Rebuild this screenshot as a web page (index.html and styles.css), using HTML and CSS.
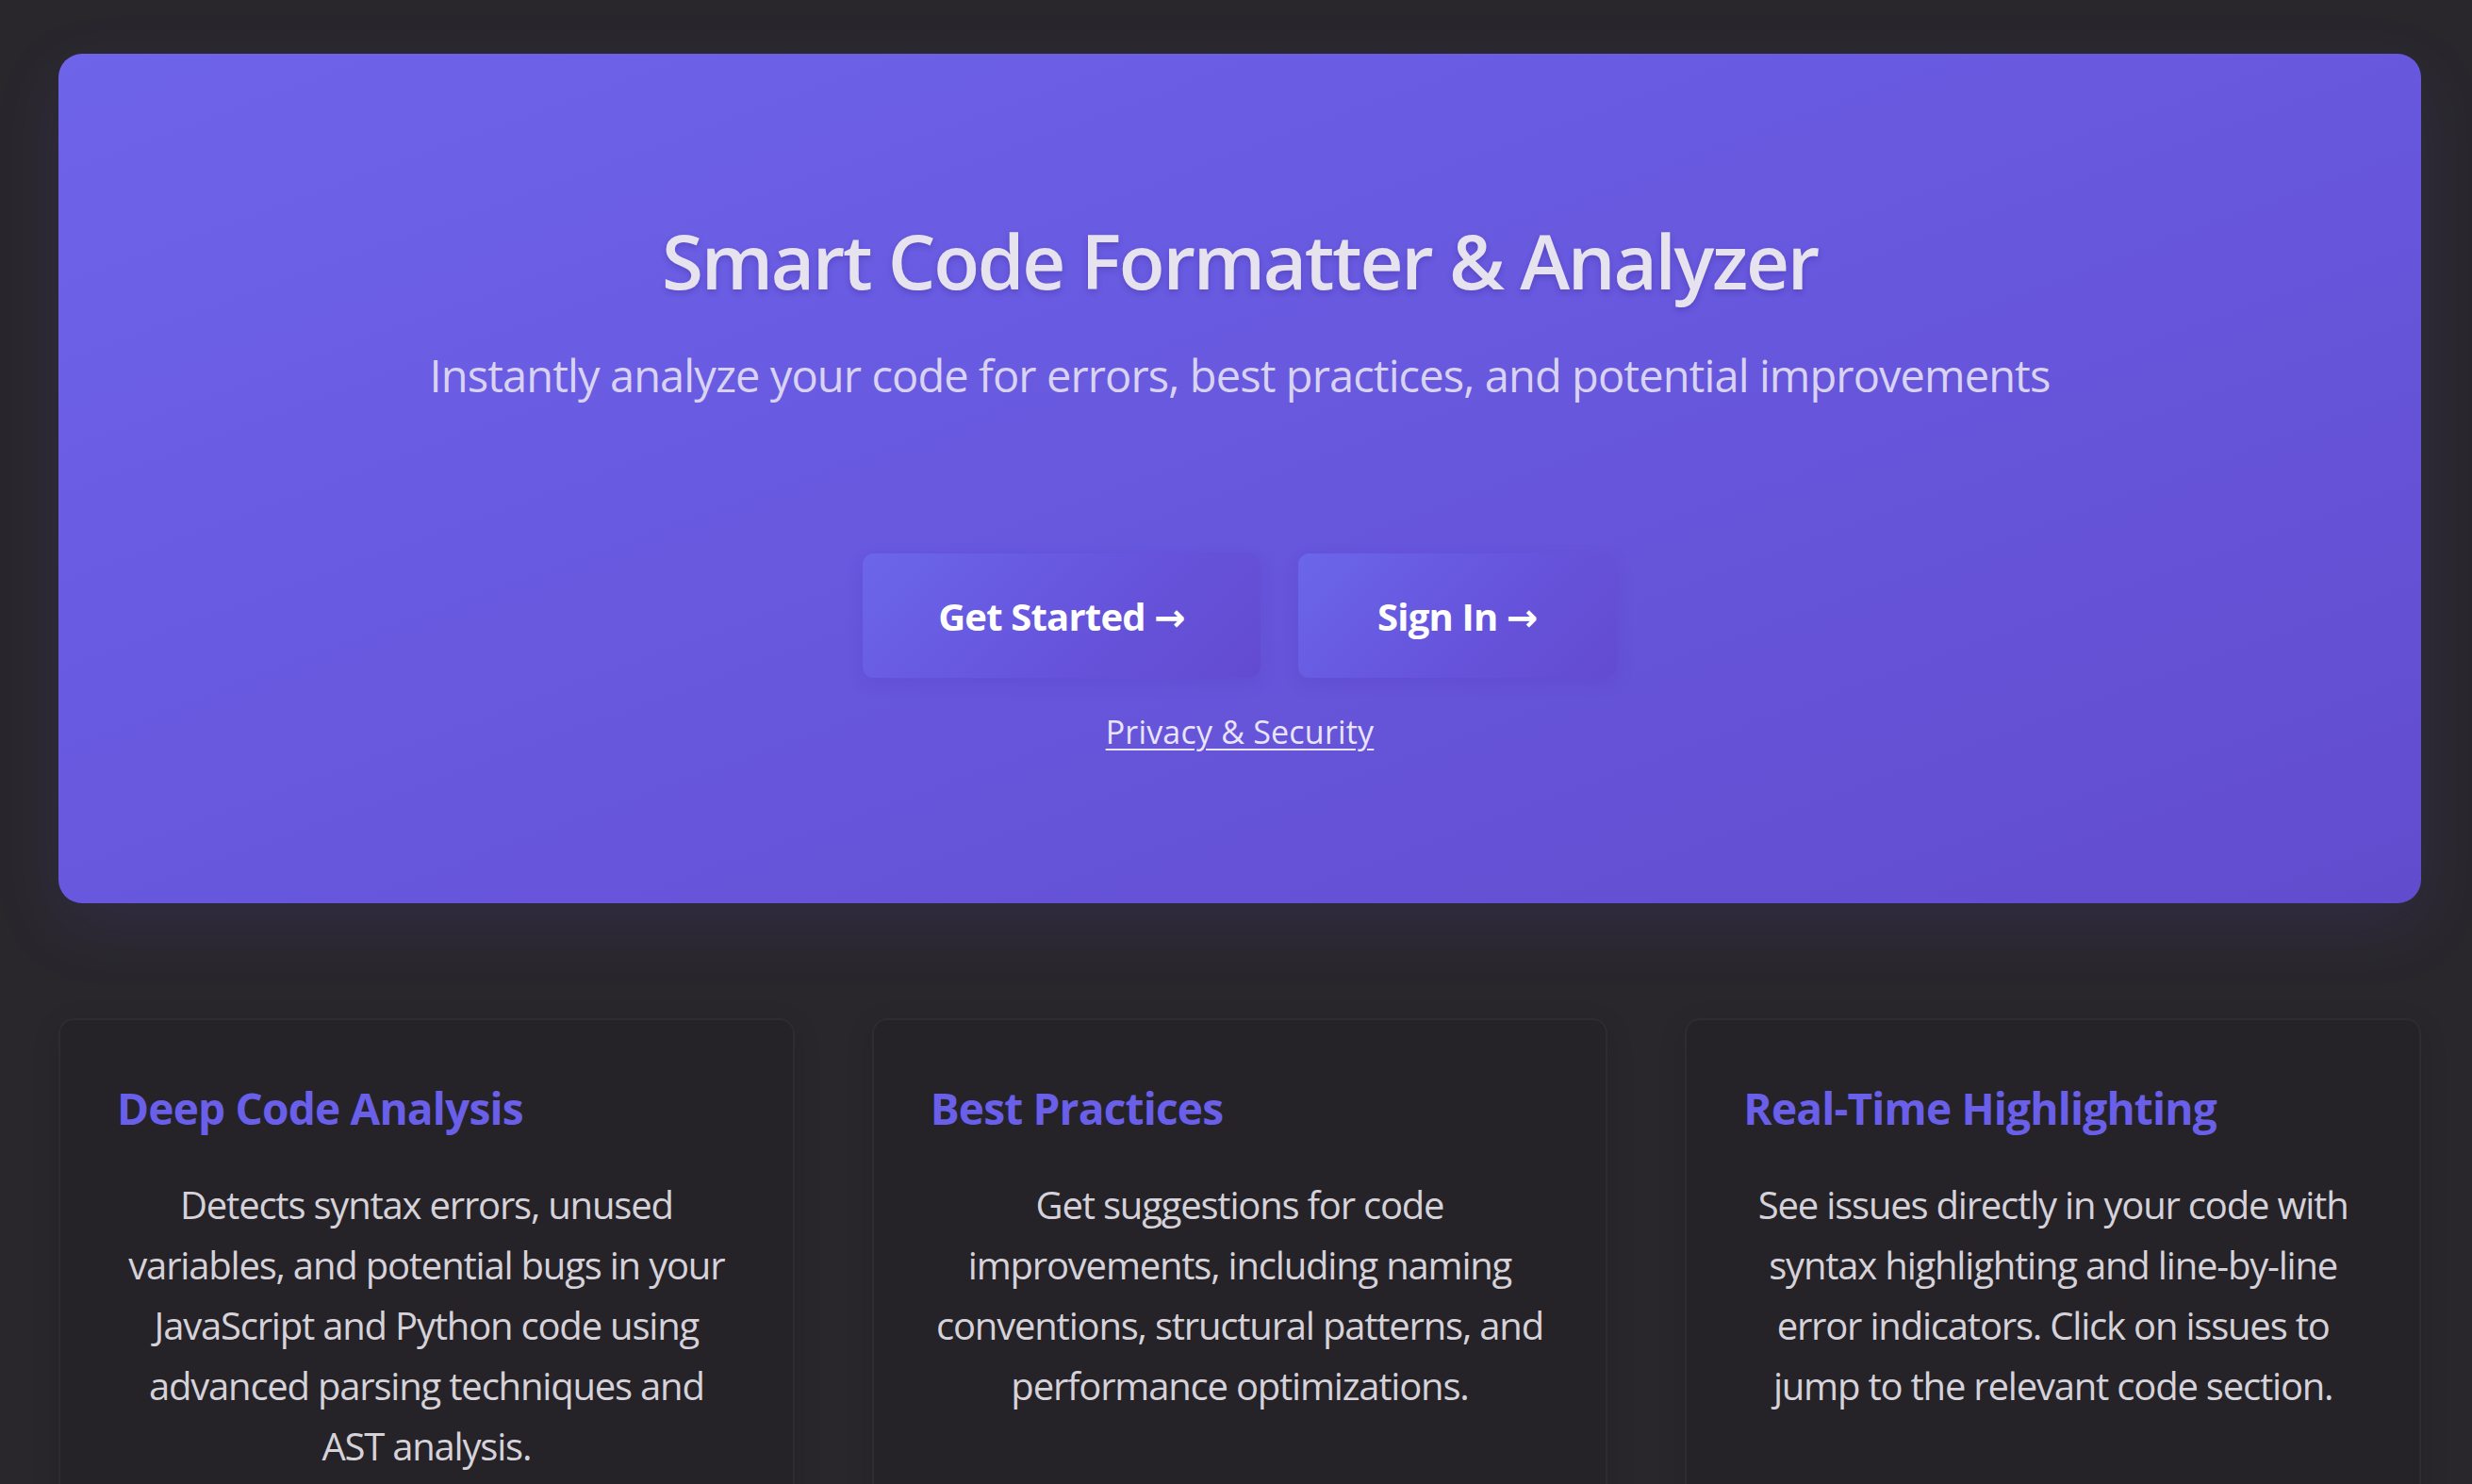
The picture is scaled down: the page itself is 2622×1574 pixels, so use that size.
FILE: index.html
```html
<!DOCTYPE html>
<html lang="en">
<head>
<meta charset="utf-8">
<title>Smart Code Formatter &amp; Analyzer</title>
<link rel="stylesheet" href="styles.css">
</head>
<body>
<main class="page">
  <section class="hero">
    <h1 class="hero-title">Smart Code Formatter &amp; Analyzer</h1>
    <p class="hero-subtitle">Instantly analyze your code for errors, best practices, and potential improvements</p>
    <div class="hero-actions">
      <a class="btn btn-start" href="#">Get Started →</a>
      <a class="btn btn-signin" href="#">Sign In →</a>
    </div>
    <a class="privacy-link" href="#">Privacy &amp; Security</a>
  </section>
  <section class="features">
    <article class="card">
      <h2 class="card-title">Deep Code Analysis</h2>
      <p class="card-text">Detects syntax errors, unused variables, and potential bugs in your JavaScript and Python code using advanced parsing techniques and AST analysis.</p>
    </article>
    <article class="card">
      <h2 class="card-title">Best Practices</h2>
      <p class="card-text">Get suggestions for code improvements, including naming conventions, structural patterns, and performance optimizations.</p>
    </article>
    <article class="card">
      <h2 class="card-title">Real-Time Highlighting</h2>
      <p class="card-text">See issues directly in your code with syntax highlighting and line-by-line error indicators. Click on issues to jump to the relevant code section.</p>
    </article>
  </section>
</main>
</body>
</html>
```
FILE: styles.css
```css
* { box-sizing: border-box; }
html, body { margin: 0; padding: 0; }
body {
  background: #29272c;
  font-family: "Open Sans", "Noto Sans", "DejaVu Sans", sans-serif;
  color: #e4e1ea;
  overflow: hidden;
}
.page {
  padding: 57px 54px 0 62px;
}
.hero {
  height: 901px;
  border-radius: 25px;
  background: linear-gradient(160deg, #6e64e9 0%, #6859df 45%, #624cce 100%);
  box-shadow: 0 24px 70px rgba(98, 80, 210, 0.14);
  display: flex;
  flex-direction: column;
  align-items: center;
  padding-top: 171px;
  text-align: center;
}
.hero-title {
  margin: 0;
  font-size: 80px;
  line-height: 96px;
  font-weight: 600;
  color: #e6e3ee;
  letter-spacing: -2.3px;
  text-shadow: 0 3px 6px rgba(40, 20, 120, 0.25);
}
.hero-subtitle {
  margin: 39px 0 0;
  font-size: 47px;
  line-height: 70px;
  font-weight: 400;
  color: #d9d3f2;
  letter-spacing: -0.9px;
}
.hero-actions {
  margin-top: 154px;
  display: flex;
  gap: 40px;
}
.btn {
  display: flex;
  align-items: center;
  justify-content: center;
  height: 132px;
  padding: 0 80px;
  border-radius: 12px;
  color: #ffffff;
  font-size: 40px;
  font-weight: 700;
  text-decoration: none;
  letter-spacing: -0.8px;
  background: linear-gradient(135deg, #6b66ea 0%, #6654dc 55%, #634bd0 100%);
  box-shadow: 0 6px 18px rgba(60, 30, 160, 0.12);
}
.btn-signin {
  padding: 0 84px;
}
.privacy-link {
  margin-top: 32px;
  font-size: 34px;
  line-height: 50px;
  color: #eae4fa;
  text-decoration: underline;
  text-underline-offset: 5px;
  text-decoration-thickness: 2px;
  letter-spacing: 0.2px;
}
.features {
  margin-top: 122px;
  display: grid;
  grid-template-columns: repeat(3, 1fr);
  gap: 82px;
}
.card {
  background: #252328;
  border: 2px solid #2e2b35;
  border-radius: 16px;
  padding: 65px 60px 60px;
  box-shadow: 0 8px 30px rgba(0, 0, 0, 0.12);
}
.card-title {
  margin: 0 0 43px;
  font-size: 46px;
  line-height: 56px;
  font-weight: 700;
  color: #6a5fe9;
  letter-spacing: -0.8px;
}
.card-text {
  margin: 0;
  font-size: 40px;
  line-height: 64px;
  color: #d6d2da;
  text-align: center;
  letter-spacing: -1.2px;
}
```
